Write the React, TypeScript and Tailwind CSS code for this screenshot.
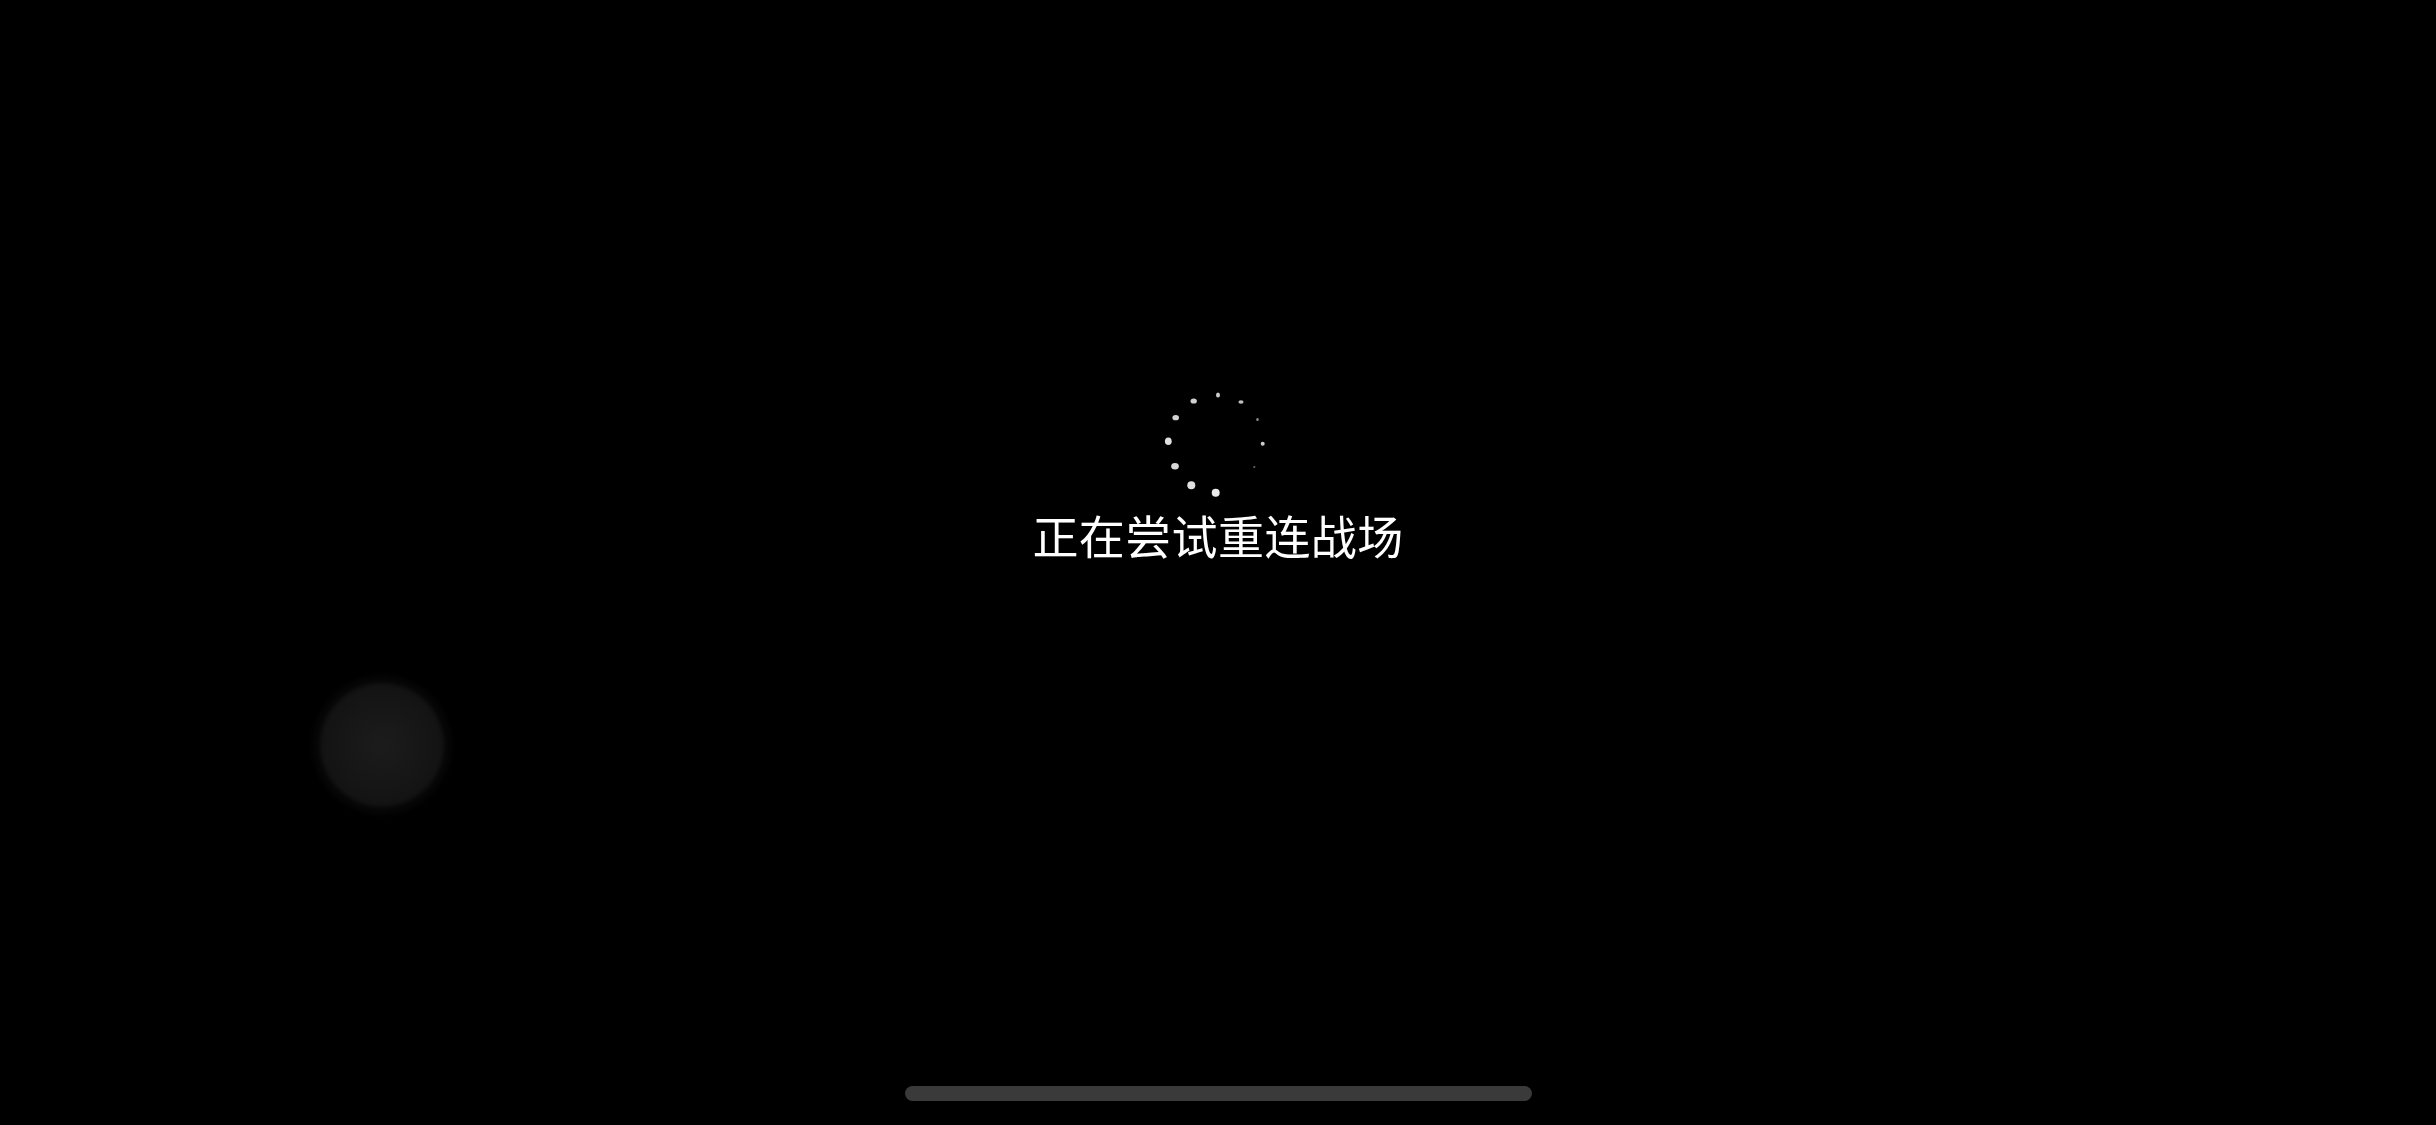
import React from "react";

// dot positions are relative to the spinner box
const spinnerDots = [
  { cx: 58, cy: 9, rx: 2, ry: 2.5, o: 0.8 },
  { cx: 81, cy: 16, rx: 2.6, ry: 1.8, o: 0.75 },
  { cx: 97.5, cy: 33.5, rx: 1.3, ry: 1.6, o: 0.55 },
  { cx: 102.7, cy: 57.7, rx: 2, ry: 2, o: 0.8 },
  { cx: 94.3, cy: 81, rx: 1.1, ry: 1.1, o: 0.4 },
  { cx: 55.7, cy: 106.7, rx: 4, ry: 4, o: 0.92 },
  { cx: 31.3, cy: 99.3, rx: 4, ry: 4, o: 0.88 },
  { cx: 15, cy: 80.3, rx: 3.8, ry: 3.2, o: 0.85 },
  { cx: 8.3, cy: 55.3, rx: 3.4, ry: 3.8, o: 0.88 },
  { cx: 15.7, cy: 31.7, rx: 3.3, ry: 2.6, o: 0.82 },
  { cx: 33.7, cy: 15, rx: 3.2, ry: 2.6, o: 0.82 },
];

const Spinner = () => (
  <svg width="112" height="112" viewBox="2 0 112 112" className="blur-[0.6px]">
    {spinnerDots.map((d, i) => (
      <ellipse key={i} cx={d.cx} cy={d.cy} rx={d.rx} ry={d.ry} fill="#fff" fillOpacity={d.o} />
    ))}
  </svg>
);

export default function App() {
  return (
    <div className="relative h-[1125px] w-[2436px] overflow-hidden bg-black">
      <div className="flex flex-col items-center pt-[386px]">
        <Spinner />
        <div className="mt-[4px] text-[46px] font-normal leading-[64px] tracking-[0.4px] text-white blur-[0.4px] font-['Noto_Sans_CJK_SC','Noto_Sans',sans-serif]">
          正在尝试重连战场
        </div>
      </div>

      {/* joystick ghost */}
      <div className="absolute left-[312px] top-[675px] flex h-[140px] w-[140px] items-center justify-center rounded-full bg-[#050505] blur-[2px]">
        <div className="h-[124px] w-[124px] rounded-full bg-[radial-gradient(circle,#1c1c1c_0%,#151515_55%,#0e0e0e_100%)]" />
      </div>

      {/* home indicator */}
      <div className="absolute left-[905px] top-[1086px] h-[15px] w-[627px] rounded-full bg-[#3a3a3a]" />
    </div>
  );
}
